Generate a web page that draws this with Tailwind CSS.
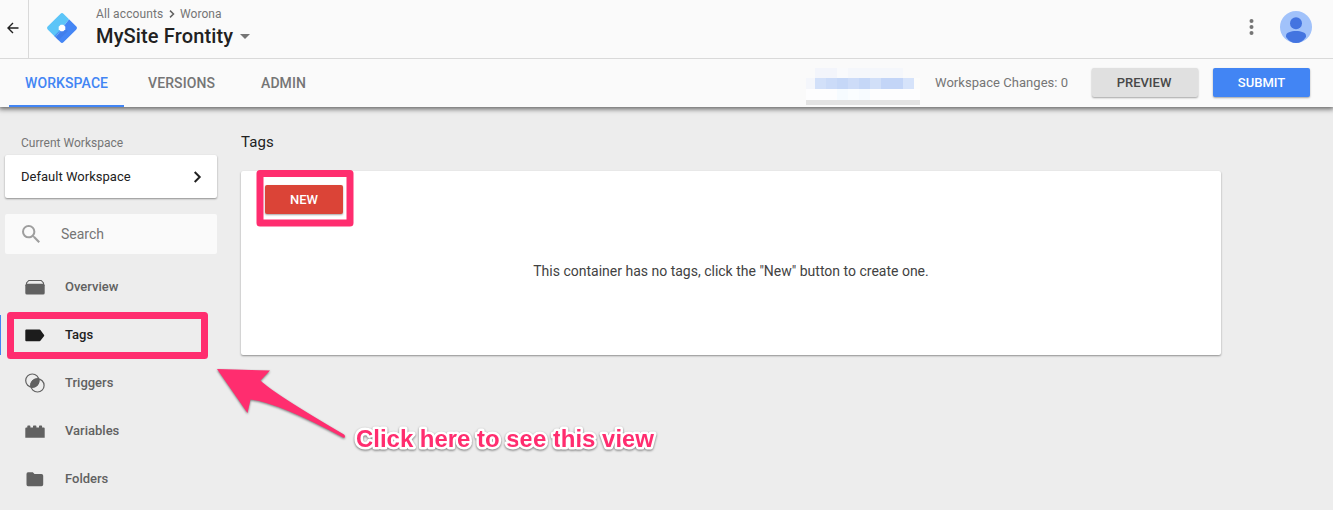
<!DOCTYPE html>
<html lang="en">
<head>
<meta charset="utf-8">
<title>Tags - MySite Frontity</title>
<script src="https://cdn.jsdelivr.net/npm/@tailwindcss/browser@4"></script>
</head>
<body class="relative flex h-[510px] w-[1333px] flex-col overflow-hidden bg-[#ededed] font-['Roboto',sans-serif] whitespace-nowrap text-[#212121]">
<header class="relative z-10 bg-[#fafafa] shadow-[0_1px_5px_1px_rgba(0,0,0,0.6)]">
  <div class="flex h-[59px] border-b border-[#d9d9d9]">
    <div class="flex w-[29px] border-r border-[#d9d9d9] pt-[22px] pl-[7px]">
      <svg class="h-[12px] w-[12px]" viewBox="0 0 12 12" fill="none" stroke="#212121" stroke-width="1.4"><path d="M11.5 6H1.2M6 1L1 6l5 5"/></svg>
    </div>
    <svg class="mt-[13px] ml-[18px] h-[30px] w-[30px]" viewBox="0 0 30 30">
      <path d="M22 6.2l7.100 7.100a2.400 2.400 0 0 1 0 3.400L16.700 29.100a2.400 2.400 0 0 1-3.400 0L8.500 24.300z" fill="#4486f5"/>
      <path d="M15 19l-6.500 5.300 3 3L21 18l-3-3z" fill="#4079e6" opacity=".6"/>
      <path d="M13.300.9a2.400 2.400 0 0 1 3.400 0L22 6.200 8.200 24 .9 16.700a2.400 2.400 0 0 1 0-3.400z" fill="#5cc5f8"/>
      <path d="M22 6.200L8.500 24.300 7.200 23 15 15z" fill="#4b92f2"/>
      <path d="M13.700 11.800h2.600l2 2v2.500l-2 2h-2.600l-2-2v-2.500z" fill="#fff"/>
    </svg>
    <div class="flex flex-col pt-[6px] pl-[19px]">
      <div class="flex h-4 items-center text-[12px] leading-4 text-[#757575]">
        <span class="w-[73px] tracking-[0.12px]">All accounts</span>
        <svg class="mr-[5px] h-[8px] w-[6px]" viewBox="0 0 6 8" fill="none" stroke="#616161" stroke-width="1.500"><path d="M1 .6L4.500 4 1 7.400"/></svg>
        <span class="tracking-[0.05px]">Worona</span>
      </div>
      <div class="flex h-7 items-center">
        <span class="w-[144px] text-[20px] leading-7 font-medium tracking-[0.14px]">MySite Frontity</span>
        <i class="h-0 w-0 border-x-5 border-t-5 border-x-transparent border-t-[#757575]"></i>
      </div>
    </div>
    <div class="ml-auto flex pt-[11px] pr-[21px]">
      <svg class="mt-[7px] mr-[26px] h-[18px] w-[5px]" viewBox="0 0 5 18" fill="#757575"><circle cx="2.500" cy="3" r="2"/><circle cx="2.500" cy="9" r="2"/><circle cx="2.500" cy="15" r="2"/></svg>
      <svg class="h-8 w-8" viewBox="0 0 32 32"><circle cx="16" cy="16" r="16" fill="#a1c2fa"/><circle cx="16" cy="12.300" r="6" fill="#4374e0"/><path d="M6 26v-1.500C6 21.500 11 20 16 20s10 1.500 10 4.500V26Q22 32 16 32T6 26z" fill="#4374e0"/></svg>
    </div>
  </div>
  <div class="flex h-[48px] pl-[9px] text-[14px] font-medium text-[#757575]">
    <div class="w-[115px] border-b-2 border-[#4285f4] pl-[16px] leading-[48px] tracking-[0.1px] text-[#4285f4]">WORKSPACE</div>
    <div class="w-[113px] pl-6 leading-[48px] tracking-[0.12px]">VERSIONS</div>
    <div class="pl-6 leading-[48px] tracking-[0.1px]">ADMIN</div>
    <div class="ml-auto flex">
      <div class="mt-[9px] mr-[15px] flex w-[114px] flex-col">
        <div class="ml-[9px] flex h-[10px] w-[99px]"><i class="w-[22px] bg-[#f3f5fb]"></i><i class="w-[11px] bg-[#f9fafc]"></i><i class="w-[55px] bg-[#f5f7fb]"></i></div>
        <div class="flex h-[11px]"><i class="w-[9px] bg-[#f4f6fb]"></i><i class="w-[11px] bg-[#d2e0f9]"></i><i class="w-[11px] bg-[#cbdbf8]"></i><i class="w-[11px] bg-[#c5d7f7]"></i><i class="w-[11px] bg-[#cddcf8]"></i><i class="w-[11px] bg-[#c5d7f7]"></i><i class="w-[11px] bg-[#d1dff8]"></i><i class="w-[22px] bg-[#c3d5f7]"></i><i class="w-[11px] bg-[#d6e3fa]"></i><i class="w-[6px] bg-[#fcfcfb]"></i></div>
        <div class="flex h-[11px] bg-[#fdfdfe] pl-[31px]"><i class="w-[11px] bg-[#f6fbff]"></i><i class="w-[11px] bg-[#fafdff]"></i><i class="w-[11px] bg-[#f7fbff]"></i></div>
        <div class="h-[5px] bg-[#e3e3e3]"></div>
      </div>
      <div class="w-[157px] text-[13px] leading-[48px] font-normal tracking-[0.05px]">Workspace Changes: 0</div>
      <div class="mt-[9px] mr-[15px] h-[29px] w-[106px] rounded-xs bg-[#e0e0e0] pr-[2px] text-center text-[13px] leading-[30px] text-[#484848] shadow-[0_1px_2px_rgba(0,0,0,0.35)]">PREVIEW</div>
      <div class="mt-[9px] mr-[23px] h-[29px] w-[97px] rounded-xs bg-[#4285f4] text-center text-[13px] leading-[30px] text-white shadow-[0_1px_2px_rgba(0,0,0,0.35)]">SUBMIT</div>
    </div>
  </div>
</header>
<div class="flex flex-1">
  <aside class="w-[241px] pt-[28px]">
    <div class="pl-[21px] text-[12px] leading-4 tracking-[0.02px] text-[#757575]">Current Workspace</div>
    <div class="mt-[4px] ml-[5px] flex h-[43px] w-[212px] items-center justify-between rounded-xs bg-white pr-[15px] pl-4 shadow-[0_1px_2px_rgba(0,0,0,0.4)]">
      <span class="text-[13px] tracking-[0.02px]">Default Workspace</span>
      <svg class="h-[12px] w-[9px]" viewBox="0 0 9 12" fill="none" stroke="#212121" stroke-width="2"><path d="M1.700 1l5 5-5 5"/></svg>
    </div>
    <div class="mt-4 ml-[5px] flex h-10 w-[212px] items-center rounded-xs bg-[#fafafa] pl-[17px] text-[#757575]">
      <svg class="mr-[21px] h-[18px] w-[18px]" viewBox="3 3 17.500 17.500" fill="#9e9e9e"><path d="M15.500 14h-.79l-.28-.27A6.471 6.471 0 0 0 16 9.500 6.500 6.500 0 1 0 9.500 16c1.610 0 3.090-.590 4.230-1.570l.27.280v.790l5 4.990L20.490 19l-4.990-5zm-6 0C7.010 14 5 11.990 5 9.500S7.010 5 9.500 5 14 7.010 14 9.500 11.990 14 9.500 14z"/></svg>
      <span class="text-[14px]">Search</span>
    </div>
    <nav class="mt-[9px] flex flex-col text-[13px] font-medium text-[#616161]">
      <div class="flex h-12 items-center pl-[25px]">
        <svg class="mr-5 h-5 w-5" viewBox="0 0 20 20"><path d="M1.500 8V6L3.800 3.500h12.400L18.500 6V8" fill="none" stroke="#616161" stroke-width="1.100"/><rect x=".3" y="6.700" width="19.400" height="10.900" rx="1.500" fill="#616161"/></svg>Overview
      </div>
      <div class="flex h-12 items-center text-[#212121]">
        <i class="mr-6 h-10 w-px bg-[#4285f4]"></i>
        <svg class="mr-5 h-5 w-5" viewBox="0 0 20 20" fill="#1c1c1c"><path d="M1.300 4.600h13.200q.7 0 1.100.600l3.500 4.700q.3.500 0 1l-3.500 4.700q-.4.600-1.100.600H1.300Q.3 16.200.3 15.200V5.600q0-1 1-1z"/></svg>Tags
      </div>
      <div class="flex h-12 items-center pl-[25px]">
        <svg class="mr-5 h-5 w-5" viewBox="0 0 20 20" fill="none" stroke="#616161" stroke-width="1.200"><circle cx="7.300" cy="7.600" r="6.600"/><circle cx="12.500" cy="12.400" r="6.600"/><path d="M13.700 5.900A6.600 6.600 0 0 0 6.100 14.100 6.600 6.600 0 0 0 13.700 5.900z" fill="#616161"/></svg>Triggers
      </div>
      <div class="flex h-12 items-center pl-[25px]">
        <svg class="mr-5 h-5 w-5" viewBox="0 0 20 20" fill="#616161"><path d="M1.300 6.500h1V5.200q0-.7.700-.7h1.700q.7 0 .7.700v1.300h2.600V5.200q0-.7.700-.7h2q.7 0 .7.700v1.300H14V5.200q0-.7.700-.7h1.700q.7 0 .7.700v1.300h1.600q1 0 1 1v9.200H.3V7.500q0-1 1-1z"/></svg>Variables
      </div>
      <div class="flex h-12 items-center pl-[25px]">
        <svg class="mr-5 h-5 w-5" viewBox="0 0 20 20" fill="#616161"><path d="M3 3.300h4.800l1.700 1.800h7q1.700 0 1.700 1.700v8.700q0 1.700-1.700 1.700H3q-1.500 0-1.500-1.700V5q0-1.700 1.500-1.700z"/></svg>Folders
      </div>
    </nav>
  </aside>
  <main class="pt-[25px]">
    <h1 class="text-[15px] leading-5 tracking-[0.1px]">Tags</h1>
    <section class="mt-[19px] h-[184px] w-[980px] rounded-xs bg-white pt-[14px] shadow-[0_1px_2px_rgba(0,0,0,0.4)]">
      <div class="ml-6 h-[29px] w-[78px] rounded-xs bg-[#db4437] text-center text-[13px] leading-[30px] font-medium text-white shadow-[0_1px_2px_rgba(0,0,0,0.35)]">NEW</div>
      <p class="mt-[47px] text-center text-[14px] leading-5 text-[#424242]">This container has no tags, click the "New" button to create one.</p>
    </section>
  </main>
</div>
<!-- Annotations -->
<svg class="absolute inset-0 z-20 h-[510px] w-[1333px]" viewBox="0 0 1333 510" fill="none">
  <g stroke="#ff2d6f" stroke-width="7" stroke-linejoin="round"><rect x="10.500" y="315.500" width="194" height="40"/><rect x="260" y="173.500" width="90" height="49.500"/></g>
  <path class="drop-shadow-[0_1px_1px_rgba(0,0,0,0.5)]" d="M217 369l53 1.500-9.500 10Q273 393 344 434.500q2 2 0 3.500Q279 403 250.500 399.500l-3 13.500z" fill="#ff2d6f"/>
</svg>
<div class="absolute top-[425px] left-[356px] z-20"><svg class="h-[34px] w-[310px] overflow-visible drop-shadow-[0_1px_1px_rgba(0,0,0,0.5)]"><text x="0" y="22" textLength="298" fill="#ff2d6f" stroke="#fff" stroke-width="5" stroke-linejoin="round" paint-order="stroke" class="font-['Liberation_Sans',sans-serif] text-[24px] font-bold">Click here to see this view</text></svg></div>
</body>
</html>
